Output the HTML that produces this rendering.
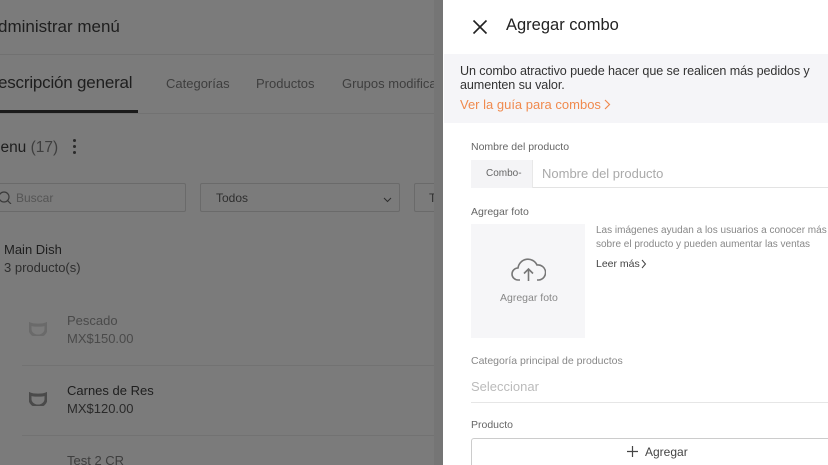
<!DOCTYPE html>
<html><head><meta charset="utf-8"><style>
*{margin:0;padding:0;box-sizing:border-box}
html,body{width:828px;height:465px;overflow:hidden}
body{position:relative;font-family:"Liberation Sans",sans-serif;background:#7b7b7b}
.a{position:absolute;white-space:nowrap}
</style></head><body>
<div class="a" style="left:0;top:0;width:443px;height:465px;background:#7b7b7b"></div>
<div class="a" style="left:-2px;top:17px;font-size:17px;color:#1e1e1e">dministrar menú</div>
<div class="a" style="left:0;top:54px;width:443px;height:1px;background:#717171"></div>
<div class="a" style="left:-2px;top:73px;font-size:17px;color:#1e1e1e;letter-spacing:-0.2px">escripción general</div>
<div class="a" style="left:0;top:110px;width:138px;height:3px;background:#1a1a1a"></div>
<div class="a" style="left:166px;top:76px;font-size:13px;color:#3e3e3e">Categorías</div>
<div class="a" style="left:256px;top:76px;font-size:13px;color:#3e3e3e">Productos</div>
<div class="a" style="left:342px;top:76px;font-size:13px;color:#3e3e3e">Grupos modificad</div>
<div class="a" style="left:0;top:113px;width:443px;height:1px;background:#727272"></div>
<div class="a" style="left:-3px;top:139px;font-size:15.5px;color:#1e1e1e">lenu <span style="color:#3e3e3e">(17)</span></div>
<div class="a" style="left:73px;top:139px;width:3px;height:3px;border-radius:50%;background:#2a2a2a;box-shadow:0 6px 0 #2a2a2a,0 12px 0 #2a2a2a"></div>
<div class="a" style="left:-10px;top:183px;width:196px;height:29px;border:1px solid #6a6a6a;border-radius:2px"></div>
<svg class="a" style="left:0;top:191px" width="12" height="13"><circle cx="4" cy="6" r="5" fill="none" stroke="#3a3a3a" stroke-width="1.2"/><path d="M7.5 9.5L11 13" stroke="#3a3a3a" stroke-width="1.2"/></svg>
<div class="a" style="left:16px;top:191px;font-size:12px;color:#555">Buscar</div>
<div class="a" style="left:200px;top:183px;width:200px;height:29px;border:1px solid #6a6a6a;border-radius:2px"></div>
<div class="a" style="left:216px;top:191px;font-size:12px;color:#2e2e2e">Todos</div>
<svg class="a" style="left:383px;top:197px" width="9" height="6"><path d="M1 1l3.5 3.5L8 1" fill="none" stroke="#2e2e2e" stroke-width="1"/></svg>
<div class="a" style="left:414px;top:183px;width:40px;height:29px;border:1px solid #6a6a6a;border-radius:2px"></div>
<div class="a" style="left:429px;top:191px;font-size:12px;color:#2e2e2e">To</div>
<div class="a" style="left:4px;top:242px;font-size:13px;color:#1e1e1e">Main Dish</div>
<div class="a" style="left:4px;top:260px;font-size:13px;color:#2e2e2e">3 producto(s)</div>
<svg class="a" style="left:29px;top:322px" width="18" height="14"><path d="M1 2c3 1.5 13 1.5 16 0v5a8 7 0 0 1-16 0z" fill="none" stroke="#6a6a6a" stroke-width="3"/></svg>
<div class="a" style="left:67px;top:313px;font-size:13px;color:#4a4a4a">Pescado</div>
<div class="a" style="left:67px;top:331px;font-size:13px;color:#4a4a4a">MX$150.00</div>
<div class="a" style="left:22px;top:365px;width:421px;height:1px;background:#727272"></div>
<svg class="a" style="left:29px;top:392px" width="18" height="14"><path d="M1 2c3 1.5 13 1.5 16 0v5a8 7 0 0 1-16 0z" fill="none" stroke="#4a4a4a" stroke-width="3"/></svg>
<div class="a" style="left:67px;top:383px;font-size:13px;color:#1e1e1e">Carnes de Res</div>
<div class="a" style="left:67px;top:401px;font-size:13px;color:#2a2a2a">MX$120.00</div>
<div class="a" style="left:22px;top:435px;width:421px;height:1px;background:#727272"></div>
<div class="a" style="left:67px;top:453px;font-size:13px;color:#3e3e3e">Test 2 CR</div>
<div class="a" style="left:434px;top:0;width:9px;height:465px;background:#757575"></div>

<div class="a" style="left:443px;top:0;width:385px;height:465px;background:#fff"></div>
<svg class="a" style="left:472px;top:19px" width="16" height="16"><path d="M1.5 1.5l13 13M14.5 1.5l-13 13" stroke="#222" stroke-width="1.6"/></svg>
<div class="a" style="left:506px;top:16px;font-size:16.5px;color:#222">Agregar combo</div>
<div class="a" style="left:444px;top:54px;width:384px;height:69px;background:#f5f5f8"></div>
<div class="a" style="left:460px;top:65px;font-size:12.6px;line-height:13.5px;color:#333;letter-spacing:-0.1px">Un combo atractivo puede hacer que se realicen más pedidos y<br>aumenten su valor.</div>
<div class="a" style="left:460px;top:97px;font-size:13px;color:#f08a4e">Ver la guía para combos</div>
<svg class="a" style="left:604px;top:99px" width="7" height="11"><path d="M1 1l4.5 4.5L1 10" fill="none" stroke="#f08a4e" stroke-width="1.2"/></svg>
<div class="a" style="left:471px;top:141px;font-size:10.5px;color:#666">Nombre del producto</div>
<div class="a" style="left:471px;top:160px;width:357px;height:28px;border-bottom:1px solid #e3e3e3"></div>
<div class="a" style="left:471px;top:160px;width:62px;height:28px;background:#f4f4f6;border-right:1px solid #e8e8e8"></div>
<div class="a" style="left:486px;top:168px;font-size:10px;color:#666">Combo-</div>
<div class="a" style="left:542px;top:166px;font-size:13px;color:#aaa">Nombre del producto</div>
<div class="a" style="left:471px;top:206px;font-size:10.5px;color:#666">Agregar foto</div>
<div class="a" style="left:471px;top:224px;width:114px;height:114px;background:#f6f6f8"></div>
<svg class="a" style="left:511px;top:256px" width="35" height="27"><path d="M9 24H7a6 6 0 0 1 0-12a10 10 0 0 1 19-3a7.5 7.5 0 0 1 2 15h-2" fill="none" stroke="#777" stroke-width="1.6"/><path d="M17.5 25V13M13 17.5l4.5-4.5 4.5 4.5" fill="none" stroke="#777" stroke-width="1.6"/></svg>
<div class="a" style="left:500px;top:292px;font-size:10.5px;color:#888">Agregar foto</div>
<div class="a" style="left:596px;top:224px;font-size:10px;line-height:13.5px;color:#888">Las imágenes ayudan a los usuarios a conocer más<br>sobre el producto y pueden aumentar las ventas</div>
<div class="a" style="left:596px;top:258px;font-size:10.5px;color:#444">Leer más</div>
<svg class="a" style="left:641px;top:259px" width="6" height="10"><path d="M1 1l3.5 4L1 9" fill="none" stroke="#444" stroke-width="1"/></svg>
<div class="a" style="left:471px;top:355px;font-size:10.5px;color:#888">Categoría principal de productos</div>
<div class="a" style="left:471px;top:379px;font-size:13px;color:#bbb">Seleccionar</div>
<div class="a" style="left:471px;top:402px;width:357px;height:1px;background:#e6e6e6"></div>
<div class="a" style="left:471px;top:419px;font-size:10.5px;color:#666">Producto</div>
<div class="a" style="left:471px;top:438px;width:360px;height:32px;border:1px solid #ccc;border-radius:3px"></div>
<svg class="a" style="left:627px;top:446px" width="11" height="11"><path d="M5.5 0v11M0 5.5h11" stroke="#444" stroke-width="1.2"/></svg>
<div class="a" style="left:645px;top:445px;font-size:12px;color:#444">Agregar</div>
</body></html>
